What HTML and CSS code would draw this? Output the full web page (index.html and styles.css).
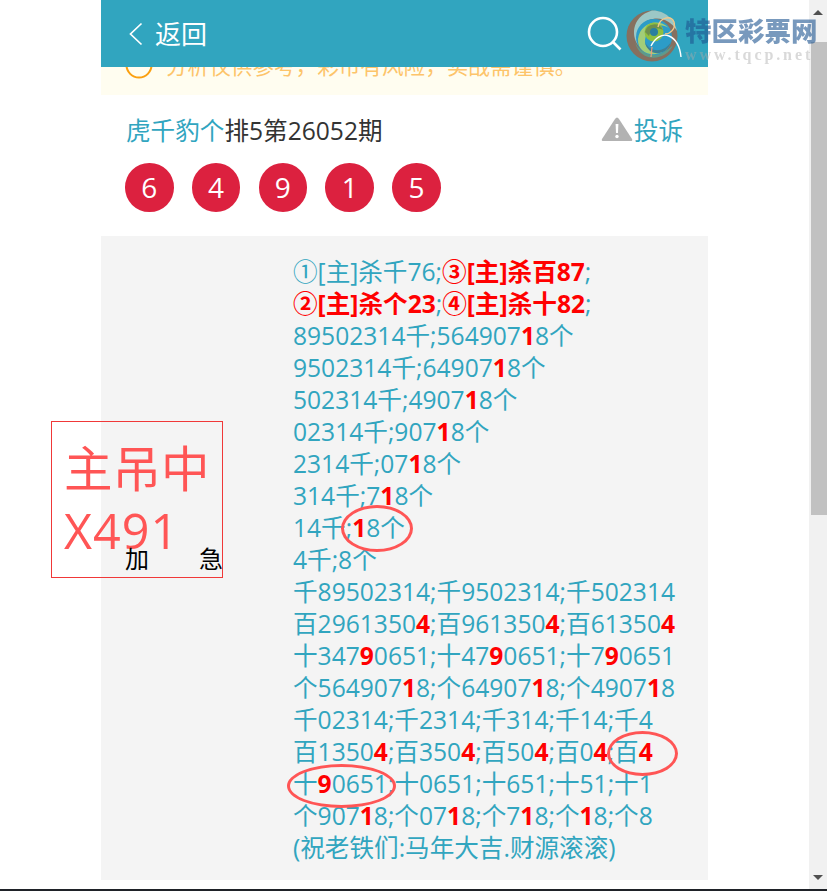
FILE: index.html
```html
<!DOCTYPE html>
<html lang="zh-CN">
<head>
<meta charset="UTF-8" />
<meta name="viewport" content="width=device-width, initial-scale=1" />
<title>虎千豹个排5第26052期</title>
<link rel="stylesheet" href="styles.css">
</head>
<body>

<div class="page">
  <!-- Top bar -->
  <div class="topbar">
    <svg class="back-icon" width="16" height="26" viewBox="0 0 16 26"><path d="M13.5 2.5 L2.5 13 L13.5 23.5" /></svg>
    <span class="back-text">返回</span>
    <svg class="search-icon" width="36" height="38" viewBox="0 0 36 38"><circle cx="17" cy="17" r="14" /><path d="M27 27 L34.5 34.5" /></svg>
  </div>

  <!-- Risk notice, partly under the bar -->
  <div class="notice">
    <svg class="notice-icon" width="28" height="28" viewBox="0 0 28 28"><circle cx="14" cy="14" r="12.5" /><path d="M14 7 V16" /></svg>
    <span>分析仅供参考，彩市有风险，实战需谨慎。</span>
  </div>

  <div class="title-row">
    <div><a class="author">虎千豹个</a>排5第26052期</div>
    <div class="report">
      <svg width="32" height="26" viewBox="0 0 32 26"><path class="tri" d="M16 1.5 Q17 1.5 18 3 L31 23 Q32 25 29.5 25 H2.5 Q0 25 1 23 L14 3 Q15 1.5 16 1.5 Z" /><path class="mark" d="M14.6 8 H17.4 L17 17 H15 Z" /><circle class="mark" cx="16" cy="20.5" r="1.7" /></svg>
      <a>投诉</a>
    </div>
  </div>

  <div class="balls">
    <span class="ball">6</span>
    <span class="ball">4</span>
    <span class="ball">9</span>
    <span class="ball">1</span>
    <span class="ball">5</span>
  </div>

  <div class="panel">
    <div class="plan">
      <div>①[主]杀千76;<b>③[主]杀百87</b>;</div>
      <div><b>②[主]杀个23</b>;<b>④[主]杀十82</b>;</div>
      <div>89502314千;564907<b>1</b>8个</div>
      <div>9502314千;64907<b>1</b>8个</div>
      <div>502314千;4907<b>1</b>8个</div>
      <div>02314千;907<b>1</b>8个</div>
      <div>2314千;07<b>1</b>8个</div>
      <div>314千;7<b>1</b>8个</div>
      <div>14千;<b>1</b>8个</div>
      <div>4千;8个</div>
      <div>千89502314;千9502314;千502314</div>
      <div>百2961350<b>4</b>;百961350<b>4</b>;百61350<b>4</b></div>
      <div>十347<b>9</b>0651;十47<b>9</b>0651;十7<b>9</b>0651</div>
      <div>个564907<b>1</b>8;个64907<b>1</b>8;个4907<b>1</b>8</div>
      <div>千02314;千2314;千314;千14;千4</div>
      <div>百1350<b>4</b>;百350<b>4</b>;百50<b>4</b>;百0<b>4</b>;百<b>4</b></div>
      <div>十<b>9</b>0651;十0651;十651;十51;十1</div>
      <div>个907<b>1</b>8;个07<b>1</b>8;个7<b>1</b>8;个<b>1</b>8;个8</div>
      <div>(祝老铁们:马年大吉.财源滚滚)</div>
    </div>
  </div>
</div>

<!-- Stamp and hand drawn rings sit on top of the page -->
<div class="stamp">
  <div class="stamp-text">主吊中<br><span class="stamp-num">X491</span></div>
  <div class="stamp-foot"><span>加</span><span>急</span></div>
</div>
<span class="ring ring-a"></span>
<span class="ring ring-b"></span>
<span class="ring ring-c"></span>

<!-- Site watermark -->
<div class="watermark">
  <svg class="wm-logo" width="56" height="54" viewBox="0 0 56 54">
    <circle cx="26" cy="27" r="25.5" fill="#86705f" />
    <path d="M26 1.5 C38 1 49 10 51 22 C45 11 33 7 23 11 C12 15 8 28 14 38 C5 30 4 8 26 1.5 Z" fill="#9cc8c6" />
    <path d="M9 33 C14 46 34 50 47 36 C41 51 15 56 9 33 Z" fill="#5f9a8a" />
    <circle cx="28" cy="28" r="18" fill="#2c9cc8" />
    <path d="M12 30 C14 14 32 8 43 19 C33 13 21 17 19 31 C18 40 28 45 38 42 C27 49 11 44 12 30 Z" fill="#a2cd78" />
    <path d="M19 33 C24 44 38 44 45 33 C40 48 22 48 19 33 Z" fill="#3f7f93" />
    <circle cx="28" cy="23" r="9.5" fill="#8fbf3f" />
    <path d="M19 23 A9.5 9.5 0 0 1 37 21 C32 18 25 19 23 27 Z" fill="#6e8f4d" />
    <circle cx="28" cy="23" r="4" fill="#2a7fa0" />
    <path d="M25 37 C29 29 36 24 43 27 C50 30 54 38 55 48" fill="none" stroke="#ffffff" stroke-width="1.4" />
    <path d="M32 18 C34 8 45 6 48 13 C50 20 44 25 39 25" fill="none" stroke="#f3c98a" stroke-width="1.4" />
    <path d="M26 38 L25 48" fill="none" stroke="#e8a080" stroke-width="1.2" />
  </svg>
  <div class="wm-text">
    <div class="wm-name">特区彩票网</div>
    <div class="wm-url">www.tqcp.net</div>
  </div>
</div>

<!-- Window scrollbar and edge of the window -->
<div class="scrollbar">
  <span class="arrow-up"></span>
  <span class="thumb"></span>
  <span class="arrow-down"></span>
</div>
<div class="window-edge"></div>

</body>
</html>
```

FILE: styles.css
```css
html, body {
  height: 100%;
  overflow: hidden;
}

body {
  margin: 0;
  background: white;
  color: #333;
  font-family: "Open Sans", "Noto Sans CJK SC", sans-serif;
  font-size: 24.6px;
}

.page {
  width: 607px;
  margin-left: 101px;
}

/* Top bar */
.topbar {
  position: relative;
  z-index: 2;
  display: flex;
  align-items: center;
  height: 67px;
  padding: 0 101px 0 27px;
  background: #31a5bf;
  color: white;
  box-sizing: border-box;
}

.back-icon path {
  fill: none;
  stroke: white;
  stroke-width: 1.7;
}

.back-text {
  margin-left: 11px;
  margin-bottom: 2px;
  font-size: 26px;
}

.search-icon {
  margin-left: auto;
  margin-right: -15px;
}

.search-icon circle, .search-icon path {
  fill: none;
  stroke: white;
  stroke-width: 2.6;
}

/* Notice */
.notice {
  display: flex;
  align-items: center;
  gap: 13px;
  height: 40px;
  margin-top: -12px;
  padding: 0 0 21px 24px;
  box-sizing: border-box;
  background: #fffdf0;
  color: #fdc46a;
  font-size: 21.6px;
  white-space: nowrap;
  overflow: hidden;
}

.notice-icon {
  flex: none;
}

.notice-icon circle, .notice-icon path {
  fill: none;
  stroke: #fba010;
  stroke-width: 2;
}

/* Title */
.title-row {
  display: flex;
  justify-content: space-between;
  align-items: center;
  height: 32px;
  margin-top: 18px;
  padding: 0 25px;
}

.author, .report a {
  color: #31a5bf;
}

.report {
  display: flex;
  align-items: center;
  gap: 1px;
}

.tri {
  fill: #b2b2b2;
}

.mark {
  fill: white;
}

/* Number balls */
.balls {
  display: flex;
  gap: 18.3px;
  margin-top: 18px;
  padding-left: 24px;
}

.ball {
  width: 48.5px;
  height: 48.5px;
  line-height: 48px;
  border-radius: 50%;
  background: #dc213f;
  color: white;
  font-size: 28px;
  text-align: center;
}

/* Plan text */
.panel {
  margin-top: 24px;
  padding: 20px 0 16px 192px;
  background: #f4f4f4;
}

.plan {
  color: #31a5bf;
  line-height: 32px;
  white-space: nowrap;
}

.plan b {
  color: #ff0000;
}

/* Stamp */
.stamp {
  position: absolute;
  left: 51px;
  top: 421px;
  width: 170px;
  height: 155px;
  border: 1.5px solid #f03838;
  color: #ff5555;
}

.stamp-text {
  margin-left: 12px;
  padding-top: 15px;
  font-size: 48.5px;
  line-height: 62px;
  white-space: nowrap;
}

.stamp-num {
  letter-spacing: 1px;
}

.stamp-foot {
  position: absolute;
  left: 73px;
  bottom: 2px;
  width: 98px;
  display: flex;
  justify-content: space-between;
  color: black;
  font-size: 24px;
  line-height: 32px;
}

/* Hand drawn rings */
.ring {
  position: absolute;
  border: 3px solid #ff5555;
  border-radius: 50%;
  box-sizing: border-box;
}

.ring-a {
  left: 341px;
  top: 505px;
  width: 72px;
  height: 47px;
}

.ring-b {
  left: 607px;
  top: 731px;
  width: 71px;
  height: 45px;
}

.ring-c {
  left: 287px;
  top: 764px;
  width: 109px;
  height: 44px;
}

/* Watermark */
.watermark {
  position: absolute;
  left: 626px;
  top: 9px;
  z-index: 3;
  display: flex;
  gap: 3px;
}

.wm-text {
  margin-top: 5px;
}

.wm-name {
  color: rgba(30, 85, 145, 0.6);
  font-family: "Noto Sans CJK SC", sans-serif;
  font-size: 26.5px;
  font-weight: 900;
  line-height: 32px;
  white-space: nowrap;
}

.wm-url {
  margin-top: 1px;
  color: rgba(170, 170, 170, 0.45);
  font-family: "Liberation Serif", serif;
  font-size: 16px;
  font-weight: 700;
  letter-spacing: 2.9px;
  line-height: 16px;
  white-space: nowrap;
}

/* Fake window scrollbar */
.scrollbar {
  position: fixed;
  top: 0;
  right: 0;
  bottom: 2px;
  width: 18px;
  background: #f1f1f1;
}

.thumb {
  position: absolute;
  left: 2px;
  right: 0;
  top: 42px;
  height: 473px;
  background: #c1c1c1;
}

.arrow-up, .arrow-down {
  position: absolute;
  left: 4px;
  width: 0;
  height: 0;
  border-left: 5px solid transparent;
  border-right: 5px solid transparent;
}

.arrow-up {
  top: 10px;
  border-bottom: 5px solid #505050;
}

.arrow-down {
  bottom: 9px;
  border-top: 5px solid #505050;
}

.window-edge {
  position: fixed;
  left: 0;
  right: 0;
  bottom: 0;
  height: 2px;
  background: #1f2228;
}
```
